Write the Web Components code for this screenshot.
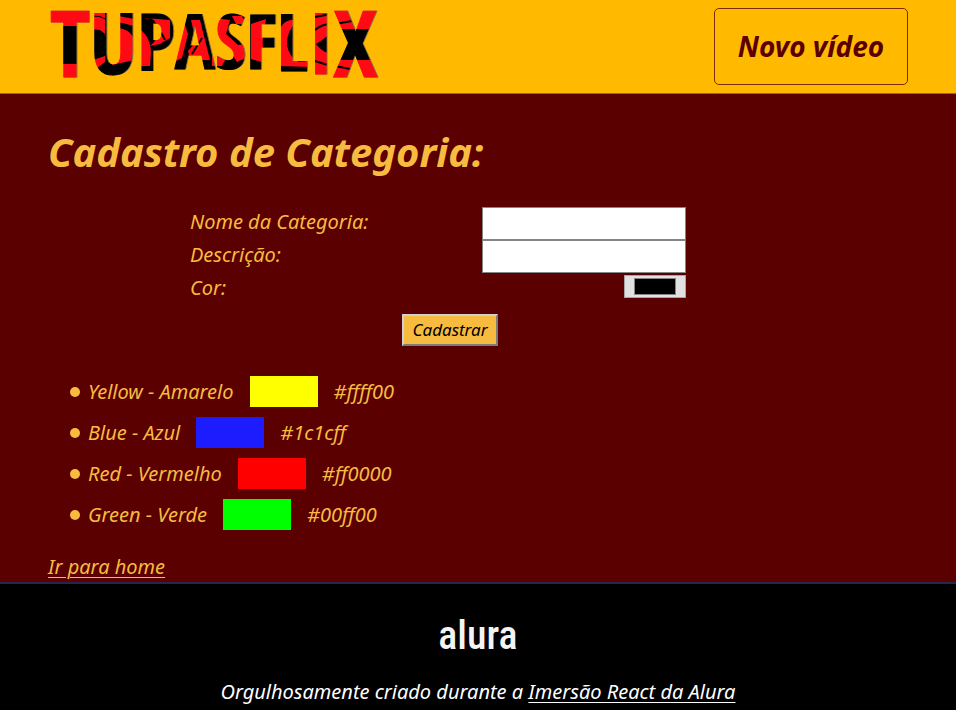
<!DOCTYPE html>
<html lang="pt-BR">
<head>
<meta charset="utf-8">
<title>Tupasflix</title>
<style>
body{margin:0;background:#fff;font:italic 20px/28px "Noto Sans",sans-serif}
</style>
</head>
<body>
<tupas-page>
  <tupas-header slot="header"></tupas-header>
  <category-form></category-form>
  <color-list></color-list>
  <text-link href="#home">Ir para home</text-link>
  <tupas-footer slot="footer"></tupas-footer>
</tupas-page>
<script>
const define = (name, html, setup) => customElements.define(name, class extends HTMLElement {
  connectedCallback() {
    if (this.shadowRoot) return;
    const root = this.attachShadow({ mode: 'open' });
    root.innerHTML = html;
    if (setup) setup(this, root);
  }
});

define('tupas-page', `
<style>
:host{display:flex;flex-direction:column;min-height:100vh;margin-right:19px;background:#5b0000;color:#f7bb3f}
main{padding:31px 48px 1px}
h1{margin:0 0 29px;font-size:40px;line-height:53px;font-weight:700}
</style>
<slot name="header"></slot>
<main><h1>Cadastro de Categoria:</h1><slot></slot></main>
<slot name="footer"></slot>`);

define('tupas-header', `
<style>
:host{display:flex;justify-content:space-between;align-items:center;padding:8px 48px;background:#ffba00;border-bottom:1px solid #776a62}
</style>
<tupas-logo></tupas-logo>
<header-button>Novo vídeo</header-button>`);

define('header-button', `
<style>
:host{display:block}
button{padding:24px 20px;min-width:194px;background:transparent;border:1px solid #7e2a00;border-radius:5px;color:#5b0000;font:inherit;font-size:28px;line-height:27px;font-weight:700;white-space:nowrap;cursor:pointer}
</style>
<button type="button"><slot></slot></button>`);

define('tupas-logo', `
<style>
:host{display:block;line-height:0}
svg{display:block;overflow:visible;filter:drop-shadow(1px 0 0 #8a7440)}
text{font-family:"Open Sans Condensed","Open Sans",sans-serif;font-weight:700;font-style:normal;stroke-width:1}
</style>
<svg width="332" height="77" viewBox="48 8 332 77" role="img" aria-label="TUPASFLIX">
<defs>
<pattern id="ink" patternUnits="userSpaceOnUse" x="40" y="0" width="345" height="100" viewBox="40 0 345 100">
<rect x="40" width="345" height="100" fill="#000"/>
<g fill="#ff0a14">
<path d="M40 0H90V26H40ZM40 64H90V100H40Z"/>
<path d="M90 0H105V34L100 30L90 29ZM90 61L105 56V62L97 68H90Z"/>
<path d="M108 14L134 19V26L108 20ZM108 28Q130 26 134 40V60L112 65Q116 40 106 28Z"/>
<path d="M136 27Q150 34 151 52L150 66L136 66Q142 48 136 32Z"/>
<path d="M144 18L170 20V38L160 44L150 46Q163 36 154 20Z"/>
<path d="M170 44L184 22L188 34L182 58L170 64ZM191 20L200 20L210 60L190 60L188 51L196 42Z"/>
<path d="M214 18L230 20L226 34L238 45L246 44V58L237 62L226 45L214 40ZM242 16H232L236 24H246ZM212 52L226 58L222 66H212Z"/>
<path d="M251 24L266 19Q260 42 265 63L251 59Z"/>
<path d="M280 29Q284 18 299 20Q286 30 287 46Q290 58 299 62L311 61V67L280 66Z"/>
<path d="M312 0H331V33L322 40L316 44Q322 52 331 54V78H312Z"/>
<path d="M331 0H380V20L370 29H331Z"/>
<path d="M331 60L380 60V90H331Z"/>
</g>
<g fill="none" stroke="#000" stroke-width="2">
<path d="M110 24Q128 21 141 34M146 15Q157 23 165 40M315 17L331 14M315 30Q322 24 331 24M315 61L331 66M335 24L352 21M335 66L350 69M192 54L202 38"/>
<path d="M91 16Q100 15 108 20" stroke-width="1"/>
</g>
</pattern>
</defs>
<text x="50" y="77" fill="url(#ink)" stroke="url(#ink)"><tspan font-size="92">T</tspan><tspan font-size="84" dy="-3">U</tspan><tspan font-size="79" dy="-3">P</tspan><tspan font-size="75" dy="-2">A</tspan><tspan font-size="75">S</tspan><tspan font-size="75">F</tspan><tspan font-size="79" dy="2">L</tspan><tspan font-size="84" dy="3">I</tspan><tspan font-size="92" dy="3">X</tspan></text>
</svg>`);

define('category-form', `
<style>
:host{display:block}
form{max-width:496px;margin:0 0 0 142px}
.actions{display:flex;justify-content:center;padding:8px 0 0 24px}
button{padding:0 8px;min-width:96px;height:32px;background:#f7bb3f;border:2px outset #d0d0d0;color:#000;font:inherit;font-size:17px;line-height:24px;cursor:pointer}
</style>
<form>
<form-field label="Nome da Categoria:" type="text"></form-field>
<form-field label="Descrição:" type="text"></form-field>
<form-field label="Cor:" type="color"></form-field>
<div class="actions"><button type="button">Cadastrar</button></div>
</form>`);

define('form-field', `
<style>
:host{display:flex;justify-content:space-between;align-items:center;height:33px}
label{padding-bottom:3px}
input{box-sizing:border-box;border-radius:0;font:inherit}
input[type=text]{width:204px;height:33px;padding:0 4px;border:1px solid #858585;background:#fff}
input[type=color]{width:62px;height:23px;margin-bottom:6px;padding:2px 9px;border:1px solid #a5a5a5;background:#e1e1e1}
input::-webkit-color-swatch-wrapper{padding:0}
input::-webkit-color-swatch{border:1px solid #858585;border-radius:0}
</style>
<label for="field"></label><input id="field">`, (host, root) => {
  root.querySelector('label').textContent = host.getAttribute('label');
  const input = root.querySelector('input');
  input.type = host.getAttribute('type');
  if (input.type === 'color') input.value = '#000000';
});

const colors = [
  ['Yellow - Amarelo', '#ffff00'],
  ['Blue - Azul', '#1c1cff'],
  ['Red - Vermelho', '#ff0000'],
  ['Green - Verde', '#00ff00']
];
define('color-list', `
<style>
:host{display:block;margin:25px 0 18px}
ul{display:grid;margin:0;padding:0 0 0 22px;list-style:none}
li{display:flex;align-items:center;min-height:41px}
li::before{content:"";width:10px;height:10px;margin-right:8px;border-radius:50%;background:currentColor}
.swatch{width:68px;height:31px;margin:0 16px}
</style>
<ul>${colors.map(([name, hex]) => `<li><span>${name}</span><span class="swatch" style="background:${hex}"></span><span>${hex}</span></li>`).join('')}</ul>`);

define('text-link', `
<style>a{color:inherit;text-decoration:underline;text-decoration-thickness:1px;text-underline-offset:3px}</style>
<a><slot></slot></a>`, (host, root) => { root.querySelector('a').href = host.getAttribute('href'); });

define('tupas-footer', `
<style>
:host{display:flex;flex:1;flex-direction:column;align-items:center;padding:28px 32px 3px;border-top:2px solid #26254c;background:#000;color:#fff;text-align:center}
.logo{font:normal 500 40px/48px "Roboto Condensed",Roboto,sans-serif;color:#f4f4f4;text-decoration:none}
p{margin:18px 0 0}
</style>
<a class="logo" href="#alura">alura</a>
<p>Orgulhosamente criado durante a <text-link href="#imersao">Imersão React da Alura</text-link></p>`);
</script>
</body>
</html>
